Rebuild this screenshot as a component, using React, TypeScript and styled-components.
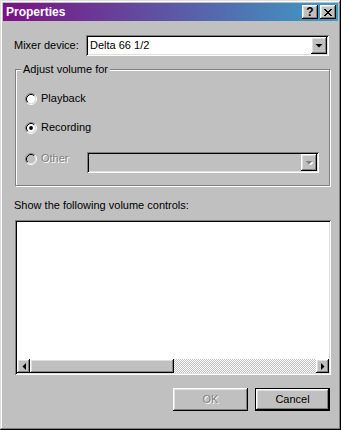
import React from "react";
import styled, { createGlobalStyle, css } from "styled-components";

const GlobalStyle = createGlobalStyle`
  html, body {
    margin: 0;
    padding: 0;
    background: #c0c0c0;
  }
  body {
    font-family: "Liberation Sans", Arial, sans-serif;
    font-size: 11px;
    line-height: 13px;
    color: #000;
  }
`;

const raised = css`
  background: #c0c0c0;
  box-shadow: inset -1px -1px #000, inset 1px 1px #fff, inset -2px -2px #808080,
    inset 2px 2px #dfdfdf;
`;

const sunken = css`
  box-shadow: inset 1px 1px #808080, inset -1px -1px #fff, inset 2px 2px #000,
    inset -2px -2px #dfdfdf;
`;

const disabledText = css`
  color: #808080;
  text-shadow: 1px 1px 0 #fff;
`;

const Window = styled.div`
  width: 341px;
  height: 430px;
  box-sizing: border-box;
  padding: 3px;
  background: #c0c0c0;
  box-shadow: inset -1px -1px #000, inset 1px 1px #dfdfdf, inset -2px -2px #808080,
    inset 2px 2px #fff;
  display: flex;
  flex-direction: column;
`;

const TitleBar = styled.div`
  height: 18px;
  display: flex;
  align-items: center;
  padding: 0 2px 0 3px;
  background: linear-gradient(to right, #7c1184, #3d9dc6);
`;

const Title = styled.span`
  flex: 1;
  color: #fff;
  font-weight: bold;
  font-size: 12px;
`;

const TitleButton = styled.div`
  ${raised};
  width: 16px;
  height: 14px;
  display: flex;
  align-items: center;
  justify-content: center;
  font-weight: bold;
  font-size: 12px;
  & + & {
    margin-left: 2px;
  }
`;

const Content = styled.div`
  flex: 1;
  display: flex;
  flex-direction: column;
  padding: 14px 6px 0 11px;
`;

const MixerRow = styled.div`
  display: flex;
  align-items: center;
  padding-right: 3px;
`;

const Label = styled.span`
  width: 72px;
`;

const Combo = styled.div<{ $disabled?: boolean; $width?: number }>`
  ${sunken};
  box-sizing: border-box;
  height: 21px;
  padding: 2px 2px 2px 4px;
  display: flex;
  align-items: center;
  background: ${(p) => (p.$disabled ? "#c0c0c0" : "#fff")};
  flex: ${(p) => (p.$width ? "none" : "1")};
  width: ${(p) => (p.$width ? `${p.$width}px` : "auto")};
`;

const ComboText = styled.span`
  flex: 1;
`;

const DropButton = styled.div<{ $disabled?: boolean }>`
  ${raised};
  width: 16px;
  height: 17px;
  display: flex;
  align-items: center;
  justify-content: center;
  color: ${(p) => (p.$disabled ? "#808080" : "#000")};
`;

const Group = styled.div`
  position: relative;
  margin: 13px 2px 0 1px;
  border: 1px solid #808080;
  box-shadow: inset 1px 1px #fff, 1px 1px #fff;
  padding: 22px 0 12px 9px;
  display: flex;
  flex-direction: column;
`;

const Legend = styled.span`
  position: absolute;
  top: -7px;
  left: 5px;
  padding: 0 2px;
  background: #c0c0c0;
`;

const OptionRow = styled.div<{ $gap: number }>`
  display: flex;
  align-items: flex-start;
  margin-top: ${(p) => p.$gap}px;
`;

const RadioItem = styled.label<{ $disabled?: boolean; $width?: number }>`
  display: flex;
  align-items: center;
  gap: 4px;
  height: 13px;
  width: ${(p) => (p.$width ? `${p.$width}px` : "auto")};
  ${(p) => p.$disabled && disabledText};
`;

const SectionLabel = styled.div`
  margin-top: 13px;
`;

const ListBox = styled.div`
  ${sunken};
  margin: 8px 1px 0 1px;
  height: 155px;
  box-sizing: border-box;
  padding: 2px;
  background: #fff;
  display: flex;
  flex-direction: column;
  justify-content: flex-end;
`;

const HScroll = styled.div`
  height: 14px;
  display: flex;
  background: repeating-conic-gradient(#c0c0c0 0 25%, #fff 0 50%) 0 0 / 2px 2px;
`;

const ScrollArrow = styled.div`
  ${raised};
  width: 13px;
  display: flex;
  align-items: center;
  justify-content: center;
`;

const Thumb = styled.div`
  ${raised};
  width: 144px;
`;

const Track = styled.div`
  flex: 1;
`;

const Buttons = styled.div`
  display: flex;
  justify-content: flex-end;
  gap: 7px;
  margin-top: 13px;
  padding-right: 2px;
`;

const PushButton = styled.div<{ $default?: boolean; $disabled?: boolean }>`
  ${raised};
  box-sizing: border-box;
  width: 75px;
  height: 23px;
  display: flex;
  align-items: center;
  justify-content: center;
  ${(p) => p.$disabled && disabledText};
  ${(p) =>
    p.$default &&
    css`
      box-shadow: inset 0 0 0 1px #000, inset -2px -2px #000, inset 2px 2px #fff,
        inset -3px -3px #808080, inset 3px 3px #dfdfdf;
    `}
`;

const Radio = ({ checked, disabled }: { checked?: boolean; disabled?: boolean }) => (
  <svg width="12" height="12" viewBox="0 0 12 12">
    <circle cx="6" cy="6" r="4.2" fill={disabled ? "#c0c0c0" : "#fff"} />
    <path d="M2.11 9.89 A5.5 5.5 0 0 1 9.89 2.11" fill="none" stroke="#808080" />
    <path d="M9.89 2.11 A5.5 5.5 0 0 1 2.11 9.89" fill="none" stroke="#fff" />
    <path d="M2.82 9.18 A4.5 4.5 0 0 1 9.18 2.82" fill="none" stroke="#000" />
    <path d="M9.18 2.82 A4.5 4.5 0 0 1 2.82 9.18" fill="none" stroke="#dfdfdf" />
    {checked && <circle cx="6" cy="6" r="1.9" fill="#000" />}
  </svg>
);

const DownArrow = ({ disabled }: { disabled?: boolean }) => (
  <svg width="8" height="5" viewBox="0 0 8 5">
    {disabled && <path d="M2 2h7l-3.5 3.5z" fill="#fff" />}
    <path d="M0.5 1h7L4 4.5z" fill={disabled ? "#808080" : "#000"} />
  </svg>
);

const SideArrow = ({ dir }: { dir: "left" | "right" }) => (
  <svg width="4" height="7" viewBox="0 0 4 7">
    <path d={dir === "left" ? "M4 0v7L0.5 3.5z" : "M0 0v7L3.5 3.5z"} fill="#000" />
  </svg>
);

const CloseGlyph = () => {
  const rows = [
    [0, 2, 6, 2],
    [1, 2, 5, 2],
    [2, 4],
    [3, 2],
    [2, 4],
    [1, 2, 5, 2],
    [0, 2, 6, 2],
  ];
  return (
    <svg width="8" height="7" viewBox="0 0 8 7" shapeRendering="crispEdges">
      {rows.map((r, y) =>
        [0, 2].filter((i) => i < r.length).map((i) => (
          <rect key={`${y}-${i}`} x={r[i]} y={y} width={r[i + 1]} height="1" fill="#000" />
        ))
      )}
    </svg>
  );
};

const App: React.FC = () => {
  return (
    <>
      <GlobalStyle />
      <Window>
        <TitleBar>
          <Title>Properties</Title>
          <TitleButton>?</TitleButton>
          <TitleButton>
            <CloseGlyph />
          </TitleButton>
        </TitleBar>
        <Content>
          <MixerRow>
            <Label>Mixer device:</Label>
            <Combo>
              <ComboText>Delta 66 1/2</ComboText>
              <DropButton>
                <DownArrow />
              </DropButton>
            </Combo>
          </MixerRow>

          <Group>
            <Legend>Adjust volume for</Legend>
            <OptionRow $gap={0}>
              <RadioItem>
                <Radio />
                Playback
              </RadioItem>
            </OptionRow>
            <OptionRow $gap={16}>
              <RadioItem>
                <Radio checked />
                Recording
              </RadioItem>
            </OptionRow>
            <OptionRow $gap={18}>
              <RadioItem $disabled $width={62}>
                <Radio disabled />
                Other
              </RadioItem>
              <Combo $disabled $width={232}>
                <ComboText />
                <DropButton $disabled>
                  <DownArrow disabled />
                </DropButton>
              </Combo>
            </OptionRow>
          </Group>

          <SectionLabel>Show the following volume controls:</SectionLabel>
          <ListBox>
            <HScroll>
              <ScrollArrow>
                <SideArrow dir="left" />
              </ScrollArrow>
              <Thumb />
              <Track />
              <ScrollArrow>
                <SideArrow dir="right" />
              </ScrollArrow>
            </HScroll>
          </ListBox>

          <Buttons>
            <PushButton $disabled>OK</PushButton>
            <PushButton $default>Cancel</PushButton>
          </Buttons>
        </Content>
      </Window>
    </>
  );
};

export default App;
